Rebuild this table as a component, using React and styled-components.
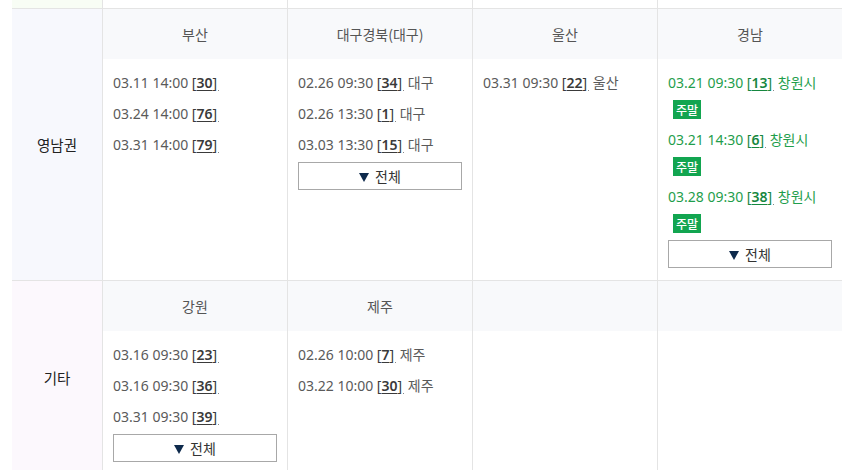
import React from "react";
import styled, { createGlobalStyle } from "styled-components";

const Global = createGlobalStyle`
  html, body { margin: 0; padding: 0; background: #fff; }
  body { font-family: "Noto Sans", "Noto Sans CJK KR", sans-serif; }
`;

const Page = styled.div`
  padding: 0 18px 0 12px;
`;

const Table = styled.div`
  display: flex;
  flex-direction: column;
  width: 830px;
`;

const Section = styled.div`
  display: flex;
  align-items: stretch;
  border-bottom: 1px solid #e4e4e4;
`;

const Label = styled.div`
  flex: 0 0 90px;
  display: flex;
  align-items: center;
  justify-content: center;
  background: ${(p) => p.$bg};
  border-right: 1px solid #e4e4e4;
  font-family: "Noto Sans CJK KR", sans-serif;
  font-size: 14.5px;
  color: #222;
`;

const Column = styled.div`
  flex: 0 0 184px;
  display: flex;
  flex-direction: column;
  border-right: 1px solid #e4e4e4;
  &:last-child { border-right: none; }
  min-height: ${(p) => (p.$tail ? "8px" : "auto")};
`;

const Header = styled.div`
  height: 50px;
  display: flex;
  align-items: center;
  justify-content: center;
  background: #f8f9fb;
  font-family: "Noto Sans CJK KR", sans-serif;
  font-size: 14px;
  color: #555;
`;

const Body = styled.div`
  flex: 1;
  display: flex;
  flex-direction: column;
  padding: 14px 10px 12px;
`;

const List = styled.div`
  display: flex;
  flex-direction: column;
  gap: 11px;
`;

const Item = styled.div`
  display: flex;
  flex-direction: column;
  font-size: 14px;
  color: ${(p) => (p.$green ? "#1f9e4c" : "#5a5a5a")};
`;

const Line = styled.div`
  height: 20px;
  line-height: 20px;
  white-space: nowrap;
`;

const Place = styled.span`
  font-family: "Noto Sans CJK KR", sans-serif;
  font-size: 14px;
  line-height: 1;
`;

const Link = styled.span`
  color: ${(p) => (p.$green ? "#16873f" : "#3a3a3a")};
`;

const Num = styled.span`
  text-decoration: underline;
  text-underline-offset: 2px;
  font-weight: 600;
`;

const Dot = styled.span`
  display: inline-block;
  width: 1px;
  height: 1px;
  margin-left: 1px;
  background: #888;
  vertical-align: -3px;
`;

const Badge = styled.span`
  display: block;
  width: fit-content;
  height: 19px;
  line-height: 19px;
  margin: 7px 0 0 5px;
  padding: 0 3px;
  background: #12a550;
  color: #fff;
  font-family: "Noto Sans CJK KR", sans-serif;
  font-size: 12px;
  font-weight: 500;
`;

const AllButton = styled.button`
  margin-top: 7px;
  height: 28px;
  width: 100%;
  display: flex;
  align-items: center;
  justify-content: center;
  gap: 6px;
  border: 1px solid #a8a8a8;
  background: #fff;
  padding: 0;
  font-family: "Noto Sans CJK KR", sans-serif;
  font-size: 14px;
  color: #333;
  cursor: pointer;
`;

const Arrow = styled.span`
  display: inline-block;
  width: 0;
  height: 0;
  border-left: 5.5px solid transparent;
  border-right: 5.5px solid transparent;
  border-top: 9px solid #0e2a4c;
  margin-top: 2px;
`;

const sections = [
  {
    label: "영남권",
    bg: "#f7f8fd",
    cols: [
      {
        name: "부산",
        items: [
          { d: "03.11 14:00", n: "30" },
          { d: "03.24 14:00", n: "76" },
          { d: "03.31 14:00", n: "79" },
        ],
      },
      {
        name: "대구경북(대구)",
        more: true,
        items: [
          { d: "02.26 09:30", n: "34", p: "대구" },
          { d: "02.26 13:30", n: "1", p: "대구" },
          { d: "03.03 13:30", n: "15", p: "대구" },
        ],
      },
      {
        name: "울산",
        items: [{ d: "03.31 09:30", n: "22", p: "울산" }],
      },
      {
        name: "경남",
        more: true,
        items: [
          { d: "03.21 09:30", n: "13", p: "창원시", green: true, badge: "주말" },
          { d: "03.21 14:30", n: "6", p: "창원시", green: true, badge: "주말" },
          { d: "03.28 09:30", n: "38", p: "창원시", green: true, badge: "주말" },
        ],
      },
    ],
  },
  {
    label: "기타",
    bg: "#fcf8fd",
    cols: [
      {
        name: "강원",
        more: true,
        items: [
          { d: "03.16 09:30", n: "23" },
          { d: "03.16 09:30", n: "36" },
          { d: "03.31 09:30", n: "39" },
        ],
      },
      {
        name: "제주",
        items: [
          { d: "02.26 10:00", n: "7", p: "제주" },
          { d: "03.22 10:00", n: "30", p: "제주" },
        ],
      },
      { name: "", items: [] },
      { name: "", items: [] },
    ],
  },
];

function Entry({ it }) {
  return (
    <Item $green={it.green}>
      <Line>
        {it.d}{" "}
        <Link $green={it.green}>
          [<Num>{it.n}</Num>]
        </Link>
        <Dot />
        {it.p ? (
          <>
            {" "}
            <Place>{it.p}</Place>
          </>
        ) : null}
      </Line>
      {it.badge ? <Badge>{it.badge}</Badge> : null}
    </Item>
  );
}

export default function App() {
  return (
    <Page>
      <Global />
      <Table>
        <Section>
          <Label $bg="#f8fdf5" />
          {[0, 1, 2, 3].map((i) => (
            <Column key={i} $tail />
          ))}
        </Section>
        {sections.map((s) => (
          <Section key={s.label}>
            <Label $bg={s.bg}>{s.label}</Label>
            {s.cols.map((c, i) => (
              <Column key={i}>
                <Header>{c.name}</Header>
                <Body>
                  <List>
                    {c.items.map((it, j) => (
                      <Entry key={j} it={it} />
                    ))}
                  </List>
                  {c.more ? (
                    <AllButton type="button">
                      <Arrow />
                      전체
                    </AllButton>
                  ) : null}
                </Body>
              </Column>
            ))}
          </Section>
        ))}
      </Table>
    </Page>
  );
}
